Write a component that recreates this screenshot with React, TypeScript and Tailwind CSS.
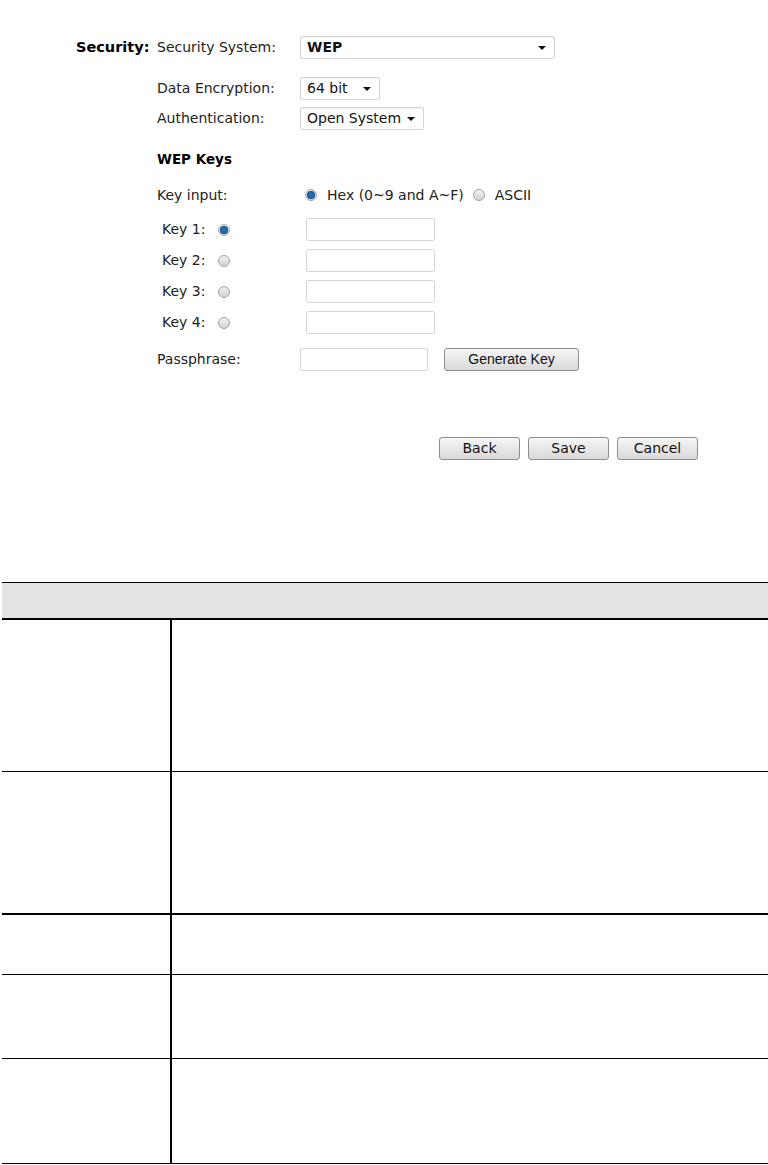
const font = "font-['DejaVu_Sans',Verdana,sans-serif]"

function Select({ value, width, bold }: { value: string; width: string; bold?: boolean }) {
  return (
    <div
      className={`${width} h-[23px] flex items-center justify-between border border-[#d4d4d4] rounded-[2px] bg-white pl-[6px] pr-[8px] shadow-[inset_0_1px_1px_rgba(0,0,0,0.04)]`}
    >
      <span className={`text-[14px] text-[#111] ${bold ? 'font-bold text-[13px]' : ''}`}>{value}</span>
      <span className="w-0 h-0 border-l-[4px] border-r-[4px] border-t-[4px] border-l-transparent border-r-transparent border-t-[#111]" />
    </div>
  )
}

function Radio({ checked }: { checked?: boolean }) {
  return (
    <span className="w-[12px] h-[12px] rounded-full border border-[#a3a3a3] bg-gradient-to-b from-[#f2f2f2] to-[#d2d2d2] flex items-center justify-center shrink-0">
      {checked && (
        <span className="w-[6px] h-[6px] rounded-full bg-[#1d6fb0] shadow-[0_0_0_1px_#0f4d82]" />
      )}
    </span>
  )
}

function TextInput({ width }: { width: string }) {
  return <div className={`${width} h-[23px] border border-[#d6d6d6] rounded-[2px] bg-white`} />
}

function Button({ label, width, className = '' }: { label: string; width: string; className?: string }) {
  return (
    <div
      className={`${width} h-[23px] flex items-center justify-center border border-[#8e8e8e] rounded-[3px] bg-gradient-to-b from-[#f6f6f6] to-[#d9d9d9] text-[14px] text-[#111] ${className}`}
    >
      {label}
    </div>
  )
}

function KeyRow({ n, checked }: { n: number; checked?: boolean }) {
  return (
    <div className="flex items-center h-[23px]">
      <span className="pl-[5px] w-[61px] text-[14px] whitespace-nowrap">Key {n}:</span>
      <Radio checked={checked} />
      <span className="w-[76px]" />
      <TextInput width="w-[129px]" />
    </div>
  )
}

const rows = [151, 141, 59, 83, 104]
const thick = [false, true, false, false, false]

export default function App() {
  return (
    <div className={`${font} w-[768px] h-[1165px] bg-white text-[#222] overflow-hidden`}>
      <div className="flex pt-[36px]">
        <div className="w-[157px] pl-[76px] h-[23px] flex items-center">
          <span className="text-[14.5px] font-bold text-black">Security:</span>
        </div>
        <div className="flex flex-col">
          <div className="flex items-center h-[23px]">
            <span className="w-[143px] text-[14px]">Security System:</span>
            <Select value="WEP" width="w-[255px]" bold />
          </div>
          <div className="flex items-center h-[23px] mt-[18px]">
            <span className="w-[143px] text-[14px]">Data Encryption:</span>
            <Select value="64 bit" width="w-[80px]" />
          </div>
          <div className="flex items-center h-[23px] mt-[7px]">
            <span className="w-[143px] text-[14px]">Authentication:</span>
            <Select value="Open System" width="w-[124px]" />
          </div>
          <div className="mt-[21px] h-[16px] flex items-center text-[13.5px] font-bold text-black">WEP Keys</div>
          <div className="mt-[20px] h-[16px] flex items-center text-[14px]">
            <span className="w-[148px]">Key input:</span>
            <Radio checked />
            <span className="ml-[10px]">Hex (0~9 and A~F)</span>
            <span className="ml-[9px]">
              <Radio />
            </span>
            <span className="ml-[10px]">ASCII</span>
          </div>
          <div className="mt-[15px] flex flex-col gap-[8px]">
            <KeyRow n={1} checked />
            <KeyRow n={2} />
            <KeyRow n={3} />
            <KeyRow n={4} />
          </div>
          <div className="flex items-center h-[23px] mt-[14px]">
            <span className="w-[143px] text-[14px]">Passphrase:</span>
            <TextInput width="w-[128px]" />
            <Button
              label="Generate Key"
              width="w-[135px]"
              className="ml-[16px] font-['Liberation_Sans',Arial,sans-serif]"
            />
          </div>
        </div>
      </div>

      <div className="flex gap-[8px] pl-[439px] mt-[66px]">
        <Button label="Back" width="w-[81px]" />
        <Button label="Save" width="w-[81px]" />
        <Button label="Cancel" width="w-[81px]" />
      </div>

      <div className="mt-[122px] ml-[2px]">
        <div className="h-[38px] border-t border-black border-b-2 bg-[#e3e3e3]" />
        {rows.map((h, i) => (
          <div
            key={i}
            className={`flex ${thick[i] ? 'border-b-2' : 'border-b'} border-black`}
            style={{ height: h + (thick[i] ? 2 : 1) }}
          >
            <div className="w-[170px] border-r-2 border-black" />
            <div className="flex-1" />
          </div>
        ))}
      </div>
    </div>
  )
}
